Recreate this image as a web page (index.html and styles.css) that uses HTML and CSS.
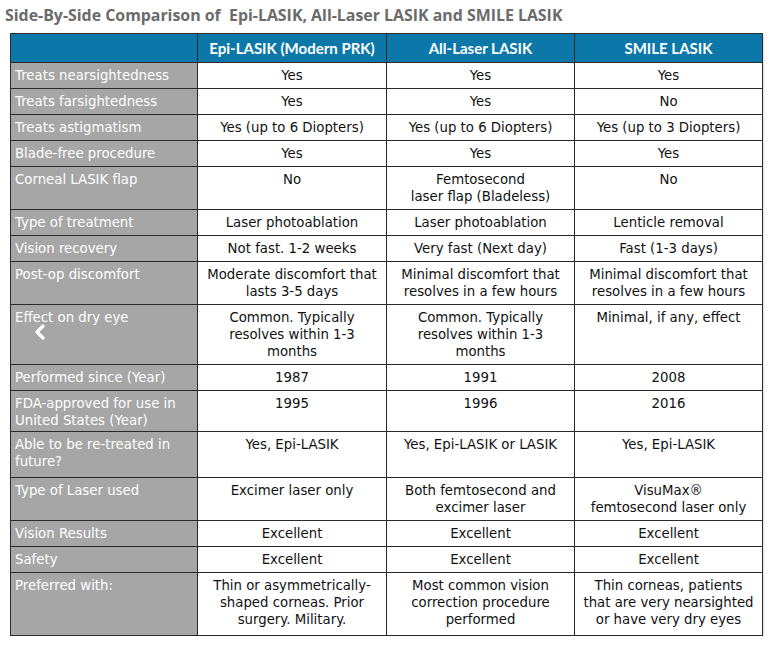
FILE: index.html
```html
<!DOCTYPE html>
<html>
<head>
<meta charset="utf-8">
<link rel="stylesheet" href="styles.css">
</head>
<body>
<div class="page">
  <h1 class="title">Side-By-Side Comparison of &nbsp;Epi-LASIK, All-Laser LASIK and SMILE LASIK</h1>
  <div class="wrap">
    <table class="cmp">
      <colgroup>
        <col class="c0"><col class="c1"><col class="c2"><col class="c3">
      </colgroup>
      <thead>
        <tr>
          <th></th>
          <th>Epi-LASIK (Modern PRK)</th>
          <th>All-Laser LASIK</th>
          <th>SMILE LASIK</th>
        </tr>
      </thead>
      <tbody>
        <tr><td class="lab">Treats nearsightedness</td><td>Yes</td><td>Yes</td><td>Yes</td></tr>
        <tr><td class="lab">Treats farsightedness</td><td>Yes</td><td>Yes</td><td>No</td></tr>
        <tr><td class="lab">Treats astigmatism</td><td>Yes (up to 6 Diopters)</td><td>Yes (up to 6 Diopters)</td><td>Yes (up to 3 Diopters)</td></tr>
        <tr><td class="lab">Blade-free procedure</td><td>Yes</td><td>Yes</td><td>Yes</td></tr>
        <tr><td class="lab">Corneal LASIK flap</td><td>No</td><td>Femtosecond<br>laser flap (Bladeless)</td><td>No</td></tr>
        <tr><td class="lab">Type of treatment</td><td>Laser photoablation</td><td>Laser photoablation</td><td>Lenticle removal</td></tr>
        <tr><td class="lab">Vision recovery</td><td>Not fast. 1-2 weeks</td><td>Very fast (Next day)</td><td>Fast (1-3 days)</td></tr>
        <tr><td class="lab">Post-op discomfort</td><td>Moderate discomfort that<br>lasts 3-5 days</td><td>Minimal discomfort that<br>resolves in a few hours</td><td>Minimal discomfort that<br>resolves in a few hours</td></tr>
        <tr><td class="lab">Effect on dry eye</td><td>Common. Typically<br>resolves within 1-3<br>months</td><td>Common. Typically<br>resolves within 1-3<br>months</td><td>Minimal, if any, effect</td></tr>
        <tr><td class="lab">Performed since (Year)</td><td>1987</td><td>1991</td><td>2008</td></tr>
        <tr class="tight"><td class="lab">FDA-approved for use in United States (Year)</td><td>1995</td><td>1996</td><td>2016</td></tr>
        <tr class="loose"><td class="lab">Able to be re-treated in future?</td><td>Yes, Epi-LASIK</td><td>Yes, Epi-LASIK or LASIK</td><td>Yes, Epi-LASIK</td></tr>
        <tr><td class="lab">Type of Laser used</td><td>Excimer laser only</td><td>Both femtosecond and<br>excimer laser</td><td>VisuMax®<br>femtosecond laser only</td></tr>
        <tr><td class="lab">Vision Results</td><td>Excellent</td><td>Excellent</td><td>Excellent</td></tr>
        <tr><td class="lab">Safety</td><td>Excellent</td><td>Excellent</td><td>Excellent</td></tr>
        <tr class="loose"><td class="lab">Preferred with:</td><td>Thin or asymmetrically-<br>shaped corneas. Prior<br>surgery. Military.</td><td>Most common vision<br>correction procedure<br>performed</td><td>Thin corneas, patients<br>that are very nearsighted<br>or have very dry eyes</td></tr>
      </tbody>
    </table>
    <svg class="chev" width="12" height="16" viewBox="0 0 12 16"><polyline points="9,2 3,8 9,14" fill="none" stroke="#fff" stroke-width="3.2" stroke-linecap="round" stroke-linejoin="round"/></svg>
  </div>
</div>
</body>
</html>
```

FILE: styles.css
```css
html, body {
  margin: 0;
  padding: 0;
  background: #fff;
}
.page {
  padding: 3px 0 0 5px;
}
.title {
  margin: 0;
  font-family: "Open Sans", "Liberation Sans", sans-serif;
  font-weight: 700;
  font-size: 15.9px;
  line-height: 24px;
  color: #6b6b6b;
}
.wrap {
  position: relative;
  margin: 6px 0 0 5px;
  width: 752px;
}
.cmp {
  border-collapse: collapse;
  table-layout: fixed;
  width: 752px;
  font-family: "DejaVu Sans", "Liberation Sans", sans-serif;
  font-size: 13.3px;
  line-height: 17px;
  color: #111;
  box-shadow: 1px 1px 2px rgba(0, 0, 0, 0.15);
}
.c0 { width: 187px; }
.c1 { width: 189px; }
.c2 { width: 188px; }
.c3 { width: 188px; }
.cmp th {
  background: #0b78a9;
  color: #fff;
  font-family: "Lato", "Open Sans", sans-serif;
  font-weight: 700;
  font-size: 15px;
  height: 28px;
  padding: 0 4px;
  border: 1px solid #2a2a2a;
  text-align: center;
  vertical-align: middle;
}
.cmp td {
  border: 1px solid #2a2a2a;
  padding: 4px 3px 4px 3px;
  text-align: center;
  vertical-align: top;
  white-space: nowrap;
}
.cmp .tight td {
  padding-bottom: 2px;
}
.cmp .loose td {
  padding-bottom: 7px;
}
.cmp td.lab {
  background: #a6a6a6;
  color: #fff;
  text-align: left;
  padding-left: 4px;
  white-space: normal;
}
.chev {
  position: absolute;
  left: 24px;
  top: 291px;
}
```
